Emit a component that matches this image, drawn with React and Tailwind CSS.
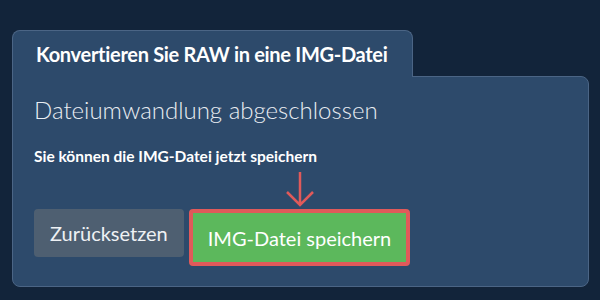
export default function App() {
  return (
    <div className="w-[600px] h-[300px] bg-[#12243a] pt-[30px] px-[12px] font-['Lato',sans-serif] overflow-hidden">
      <div className="relative z-10 -mb-px w-[401px] h-[47px] bg-[#2d4a6b] border border-b-0 border-[#4b6585] rounded-t-[8px] flex items-center px-[23px]">
        <span className="text-[20px] font-bold text-white tracking-[-0.3px]">Konvertieren Sie RAW in eine IMG-Datei</span>
      </div>
      <div className="w-[577px] h-[211px] bg-[#2d4a6b] border border-[#4b6585] rounded-b-[8px] rounded-tr-[8px] px-[21px] pt-[18px]">
        <div className="text-[24px] font-light text-[#e9edf2] leading-[30px]">Dateiumwandlung abgeschlossen</div>
        <div className="mt-[21px] text-[15.5px] font-bold text-white leading-[20px]">Sie können die IMG-Datei jetzt speichern</div>
        <div className="mt-[43px] flex items-start gap-[5px]">
          <button className="h-[48px] px-[16px] bg-[#4e5f71] rounded-[4px] text-[20px] text-[#eef1f4]">Zurücksetzen</button>
          <div className="relative">
            <svg className="absolute left-1/2 -translate-x-1/2 -top-[38px]" width="30" height="36" viewBox="0 0 30 36" fill="none">
              <path d="M15 1 V34 M2 21 L15 34 L28 21" stroke="#e05a5a" strokeWidth="2.5" />
            </svg>
            <button className="h-[57px] px-[15px] bg-[#5cb85c] border-4 border-[#e05a5a] rounded-[4px] text-[20px] text-white">IMG-Datei speichern</button>
          </div>
        </div>
      </div>
    </div>
  )
}
